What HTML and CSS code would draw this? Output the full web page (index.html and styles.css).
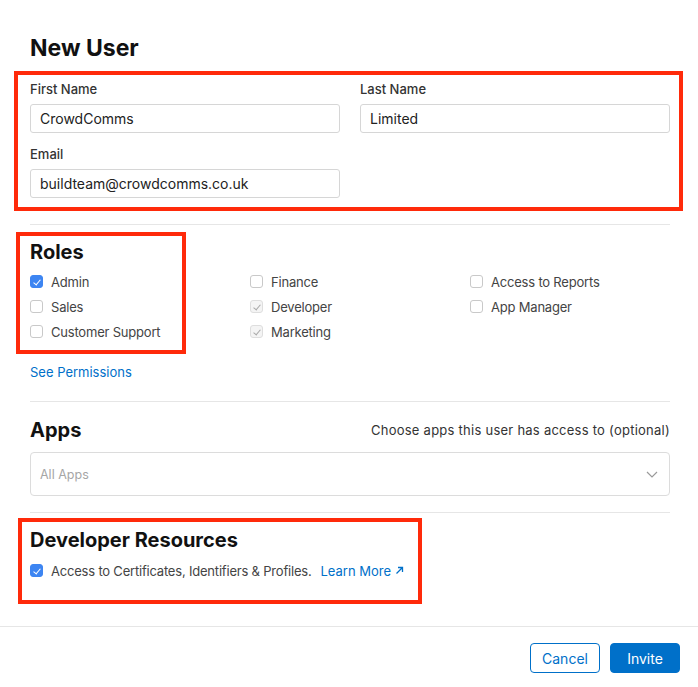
FILE: index.html
```html
<!DOCTYPE html>
<html lang="en">
<head>
  <meta charset="UTF-8">
  <meta name="viewport" content="width=device-width, initial-scale=1.0">
  <title>New User</title>
  <link rel="stylesheet" href="styles.css">
</head>
<body>
  <main class="sheet">
    <h1 class="sheet-title">New User</h1>

    <section class="fields">
      <div class="field">
        <label class="field-label" for="first-name">First Name</label>
        <input class="text-input" id="first-name" type="text" value="CrowdComms">
      </div>
      <div class="field">
        <label class="field-label" for="last-name">Last Name</label>
        <input class="text-input" id="last-name" type="text" value="Limited">
      </div>
      <div class="field">
        <label class="field-label" for="email">Email</label>
        <input class="text-input" id="email" type="text" value="buildteam@crowdcomms.co.uk">
      </div>
      <div class="highlight highlight-fields"></div>
    </section>

    <hr class="divider">

    <section class="roles">
      <h2 class="section-title">Roles</h2>
      <div class="role-grid">
        <label class="check"><span class="box on"></span>Admin</label>
        <label class="check"><span class="box"></span>Finance</label>
        <label class="check"><span class="box"></span>Access to Reports</label>
        <label class="check"><span class="box"></span>Sales</label>
        <label class="check"><span class="box locked"></span>Developer</label>
        <label class="check"><span class="box"></span>App Manager</label>
        <label class="check"><span class="box"></span>Customer Support</label>
        <label class="check"><span class="box locked"></span>Marketing</label>
      </div>
      <div class="highlight highlight-roles"></div>
    </section>

    <a class="link perms-link" href="#">See Permissions</a>

    <hr class="divider">

    <section class="apps">
      <div class="apps-head">
        <h2 class="section-title">Apps</h2>
        <span class="apps-hint">Choose apps this user has access to (optional)</span>
      </div>
      <div class="select">
        <span class="select-placeholder">All Apps</span>
        <svg class="chevron" width="12" height="7" viewBox="0 0 12 7">
          <polyline points="1,1 6,6 11,1" fill="none" stroke="#9a9a9a" stroke-width="1.2"/>
        </svg>
      </div>
    </section>

    <hr class="divider">

    <section class="dev">
      <h2 class="section-title">Developer Resources</h2>
      <div class="dev-row">
        <label class="check"><span class="box on"></span>Access to Certificates, Identifiers &amp; Profiles.</label>
        <a class="link learn-link" href="#">Learn More
          <svg width="9" height="9" viewBox="0 0 9 9">
            <path d="M1.5 7.5 L7.5 1.5 M3 1.5 H7.5 V6" fill="none" stroke="#0070c9" stroke-width="1.3"/>
          </svg>
        </a>
      </div>
      <div class="highlight highlight-dev"></div>
    </section>
  </main>

  <footer class="actions">
    <button class="btn btn-outline">Cancel</button>
    <button class="btn btn-primary">Invite</button>
  </footer>
</body>
</html>
```

FILE: styles.css
```css
body {
  margin: 0;
  background: #fff;
  font-family: 'Inter', 'Liberation Sans', sans-serif;
  color: #333;
}

.sheet {
  padding: 34px 28px 0 30px;
}

.sheet-title {
  margin: 0 0 19px;
  font-size: 23px;
  line-height: 28px;
  font-weight: 700;
  color: #111;
}

/* name + email block */
.fields {
  position: relative;
  display: grid;
  grid-template-columns: 1fr 1fr;
  column-gap: 20px;
  row-gap: 13px;
}
.field-label {
  display: block;
  font-size: 13px;
  line-height: 16px;
  font-weight: 500;
  color: #333;
  margin-bottom: 7px;
}
.text-input {
  display: block;
  width: 100%;
  height: 29px;
  box-sizing: border-box;
  border: 1px solid #d6d6d6;
  border-radius: 3px;
  padding: 0 9px;
  font-family: inherit;
  font-size: 14px;
  color: #222;
  outline: none;
}

.divider {
  border: 0;
  border-top: 1px solid #e6e6e6;
  margin: 26px 0 0;
}

.section-title {
  margin: 0;
  font-size: 20px;
  line-height: 24px;
  font-weight: 700;
  color: #111;
}

/* roles */
.roles {
  position: relative;
  margin-top: 15px;
}
.role-grid {
  display: grid;
  grid-template-columns: 220px 220px 200px;
  margin-top: 5px;
}
.check {
  display: flex;
  align-items: center;
  gap: 8px;
  height: 25px;
  font-size: 13px;
  letter-spacing: -0.2px;
  color: #444;
}
.box {
  width: 13px;
  height: 13px;
  box-sizing: border-box;
  border: 1px solid #c9c9c9;
  border-radius: 3px;
  background: #fff;
  position: relative;
  flex: none;
}
.box.on {
  background: #3d85f2;
  border-color: #3d85f2;
}
.box.locked {
  background: #f4f4f4;
  border-color: #dedede;
}
.box.on::after,
.box.locked::after {
  content: "";
  position: absolute;
  left: 4px;
  top: 1.5px;
  width: 3px;
  height: 6px;
  border: solid #fff;
  border-width: 0 1.6px 1.6px 0;
  transform: rotate(40deg);
}
.box.locked::after {
  border-color: #a8a8a8;
  border-width: 0 1.2px 1.2px 0;
}

.link {
  color: #0070c9;
  text-decoration: none;
  font-size: 13px;
}
.perms-link {
  display: block;
  margin-top: 20px;
  line-height: 16px;
}
.perms-link + .divider {
  margin-top: 21px;
}

/* apps */
.apps {
  margin-top: 16px;
}
.apps-head {
  display: flex;
  justify-content: space-between;
  align-items: center;
}
.apps-hint {
  font-size: 13px;
  letter-spacing: 0.25px;
  color: #333;
}
.select {
  margin-top: 10px;
  height: 44px;
  box-sizing: border-box;
  border: 1px solid #dcdcdc;
  border-radius: 4px;
  display: flex;
  align-items: center;
  justify-content: space-between;
  padding: 0 11px 0 9px;
}
.select-placeholder {
  font-size: 12.5px;
  color: #a6a6a6;
}
.apps + .divider {
  margin-top: 16px;
}

/* developer resources */
.dev {
  position: relative;
  margin-top: 15px;
}
.dev-row {
  display: flex;
  align-items: center;
  gap: 9px;
  margin-top: 6px;
}
.learn-link {
  display: flex;
  align-items: center;
  gap: 4px;
}

/* red callout frames */
.highlight {
  position: absolute;
  border: 4px solid #ff2a0a;
  pointer-events: none;
}
.highlight-fields {
  top: -10px;
  left: -16px;
  right: -13px;
  bottom: -13px;
}
.highlight-roles {
  top: -8px;
  left: -14px;
  width: 170px;
  height: 122px;
  box-sizing: border-box;
}
.highlight-dev {
  top: -10px;
  left: -12px;
  width: 404px;
  height: 86px;
  box-sizing: border-box;
}

/* footer buttons */
.actions {
  margin-top: 43px;
  border-top: 1px solid #e6e6e6;
  padding: 16px 18px 0 0;
  display: flex;
  justify-content: flex-end;
  gap: 10px;
}
.btn {
  width: 70px;
  height: 30px;
  border-radius: 4px;
  font-family: inherit;
  font-size: 14px;
  cursor: pointer;
}
.btn-outline {
  background: #fff;
  border: 1px solid #0070c9;
  color: #0070c9;
}
.btn-primary {
  background: #0070c9;
  border: 1px solid #0070c9;
  color: #fff;
}
```
